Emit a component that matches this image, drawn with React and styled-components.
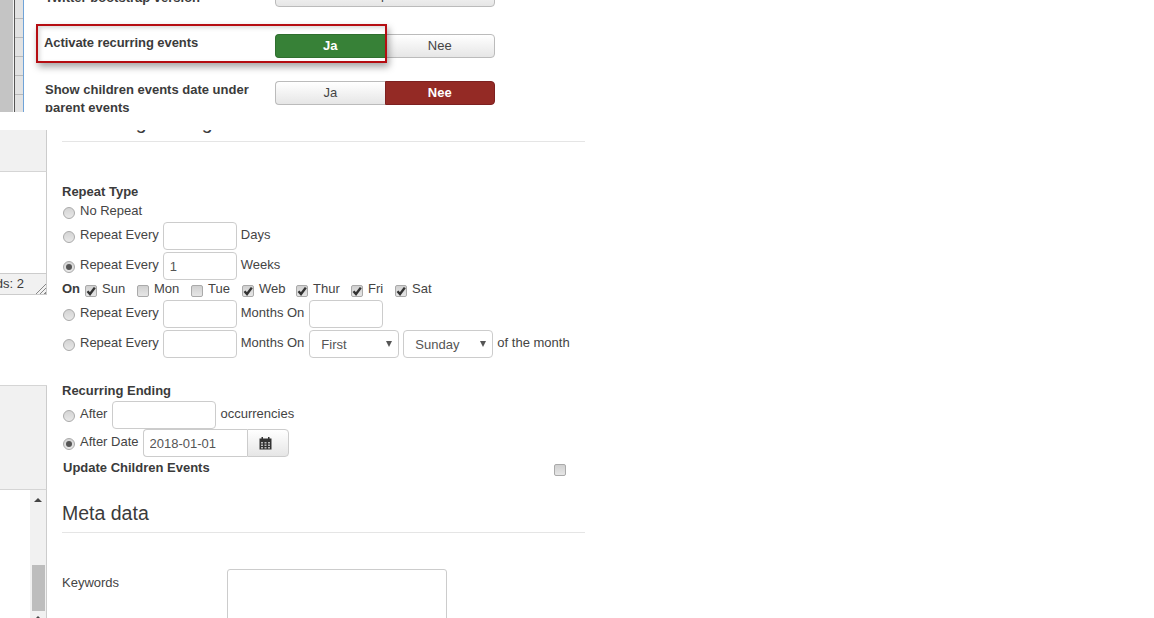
import React from "react";
import styled, { createGlobalStyle, css } from "styled-components";

const Check = () => (
  <svg width="10" height="10" viewBox="0 0 10 10">
    <path d="M1.5 5.2 L4 8 L8.8 1.6" fill="none" stroke="#333" strokeWidth="2.4" />
  </svg>
);

const CalendarIcon = () => (
  <svg width="13" height="13" viewBox="0 0 13 13">
    <path d="M0.5 1.5h12v11h-12z" fill="#333" />
    <path d="M2.5 0h1.5v2H2.5zM9 0h1.5v2H9z" fill="#333" />
    <path
      d="M2 5h2v1.5H2zM5.5 5h2v1.5h-2zM9 5h2v1.5H9zM2 7.5h2V9H2zM5.5 7.5h2V9h-2zM9 7.5h2V9H9zM2 10h2v1.5H2zM5.5 10h2v1.5h-2zM9 10h2v1.5H9z"
      fill="#bbb"
    />
  </svg>
);

const SwitchGroup = ({ value }) => (
  <Switch>
    <SwitchBtn $on={value === "ja"} $tone="green">Ja</SwitchBtn>
    <SwitchBtn $on={value === "nee"} $tone="red">Nee</SwitchBtn>
  </Switch>
);

const App = () => {
  return (
    <>
      <GlobalStyle />
      <Page>
        <TopShot>
          <GridStrip />
          <Settings>
            <CutRow>
              <CutLabel>Twitter bootstrap version</CutLabel>
              <Switch>
                <SwitchBtn>Import</SwitchBtn>
              </Switch>
            </CutRow>
            <SettingRow>
              <ActiveLabel>Activate recurring events</ActiveLabel>
              <SwitchGroup value="ja" />
              <Highlight />
            </SettingRow>
            <SettingRow>
              <SettingLabel>Show children events date under parent events</SettingLabel>
              <SwitchGroup value="nee" />
            </SettingRow>
          </Settings>
        </TopShot>

        <LowerShot>
          <Sidebar>
            <SideBand $h={42} />
            <SideBlank $h={101} />
            <SideFooter>
              <span>ds: 2</span>
              <Grip />
            </SideFooter>
            <SideGap />
            <SideBand $h={104} />
            <SideScroll>
              <Track>
                <Arrow $mt={8} />
                <Thumb />
                <Arrow $mt={5} />
              </Track>
            </SideScroll>
          </Sidebar>

          <Form>
            <ClipTitle>
              <Title>Recurring Settings</Title>
            </ClipTitle>

            <Group>
              <GroupLabel>Repeat Type</GroupLabel>
              <Row $h={21} $pad={0}>
                <Radio />
                <RowText>No Repeat</RowText>
              </Row>
              <Row $h={30}>
                <Radio />
                <RowText>Repeat Every</RowText>
                <Input />
                <RowText>Days</RowText>
              </Row>
              <Row $h={27}>
                <Radio $on />
                <RowText>Repeat Every</RowText>
                <Input defaultValue="1" />
                <RowText>Weeks</RowText>
              </Row>
              <Row $h={21} $pad={0}>
                <OnLabel>On</OnLabel>
                {days.map((d) => (
                  <Day key={d.name} $w={d.w}>
                    <Box>{d.on && <Check />}</Box>
                    <RowText>{d.name}</RowText>
                  </Day>
                ))}
              </Row>
              <Row $h={30}>
                <Radio />
                <RowText>Repeat Every</RowText>
                <Input />
                <RowText $gap={5}>Months On</RowText>
                <Input />
              </Row>
              <Row $h={30}>
                <Radio />
                <RowText>Repeat Every</RowText>
                <Input />
                <RowText $gap={5}>Months On</RowText>
                <Select>
                  <span>First</span>
                  <Caret />
                </Select>
                <Select>
                  <span>Sunday</span>
                  <Caret />
                </Select>
                <RowText>of the month</RowText>
              </Row>
            </Group>

            <EndGroup>
              <EndLabel>Recurring Ending</EndLabel>
              <Row $h={28}>
                <Radio />
                <RowText $gap={5}>After</RowText>
                <Input $w={104} />
                <RowText>occurrencies</RowText>
              </Row>
              <Row $h={28}>
                <Radio $on />
                <RowText>After Date</RowText>
                <DateInput defaultValue="2018-01-01" />
                <CalButton>
                  <CalendarIcon />
                </CalButton>
              </Row>
              <UpdateRow>
                <GroupLabel>Update Children Events</GroupLabel>
                <UpdateBox />
              </UpdateRow>
            </EndGroup>

            <MetaTitle>Meta data</MetaTitle>
            <KeywordRow>
              <KeywordLabel>Keywords</KeywordLabel>
              <Keywords />
            </KeywordRow>
          </Form>
        </LowerShot>
      </Page>
    </>
  );
};

export default App;

const days = [
  { name: "Sun", on: true, w: 52 },
  { name: "Mon", on: false, w: 54 },
  { name: "Tue", on: false, w: 51 },
  { name: "Web", on: true, w: 54 },
  { name: "Thur", on: true, w: 55 },
  { name: "Fri", on: true, w: 44 },
  { name: "Sat", on: true, w: 40 },
];

const GlobalStyle = createGlobalStyle`
  html, body {
    margin: 0;
    padding: 0;
    background: #fff;
  }
  body {
    font-family: "Liberation Sans", Arial, sans-serif;
    font-size: 13px;
    color: #3b3b3b;
  }
  * {
    box-sizing: border-box;
  }
`;

const Page = styled.div`
  width: 1154px;
  height: 618px;
  overflow: hidden;
  background: #fff;
`;

const TopShot = styled.div`
  display: flex;
  height: 112px;
  overflow: hidden;
`;

const GridStrip = styled.div`
  width: 24px;
  flex: none;
  border-right: 1px solid #6fa3d8;
  background:
    linear-gradient(to right, #c4c4c4 0 13px, #f4f4f4 13px 14px, #555 14px 15px, transparent 15px),
    repeating-linear-gradient(to bottom, #e2e2e2 0 18px, #b9b9b9 18px 19px);
`;

const Settings = styled.div`
  margin-left: 21px;
  width: 450px;
  display: flex;
  flex-direction: column;
  margin-top: -27px;
`;

const rowBase = css`
  position: relative;
  display: flex;
  justify-content: space-between;
  align-items: flex-start;
  flex: none;
`;

const CutRow = styled.div`
  ${rowBase}
  height: 61px;
  padding-top: 10px;
`;

const SettingRow = styled.div`
  ${rowBase}
  height: 47px;
`;

const SettingLabel = styled.label`
  width: 210px;
  font-weight: bold;
  font-size: 13px;
  line-height: 18px;
`;

const CutLabel = styled(SettingLabel)`
  margin-top: 6px;
`;

const ActiveLabel = styled(SettingLabel)`
  margin-left: -1px;
  letter-spacing: -0.08px;
`;

const Switch = styled.div`
  display: flex;
  width: 220px;
  height: 24px;
  flex: none;
`;

const SwitchBtn = styled.button`
  flex: 1;
  height: 24px;
  padding: 0 0 2px;
  font: 13px "Liberation Sans", Arial, sans-serif;
  color: #444;
  border: 1px solid #bbb;
  background: linear-gradient(to bottom, #fff, #e6e6e6);
  &:first-child {
    border-top-left-radius: 4px;
    border-bottom-left-radius: 4px;
  }
  &:last-child {
    border-top-right-radius: 4px;
    border-bottom-right-radius: 4px;
  }
  &:first-child:not(:last-child) {
    border-right: 0;
  }
  ${(p) =>
    p.$on &&
    css`
      font-weight: bold;
      color: #fff;
      border-color: ${p.$tone === "green" ? "#2f6f2f" : "#7d2020"};
      background: ${p.$tone === "green" ? "#378137" : "#942a25"};
    `}
`;

const Highlight = styled.div`
  position: absolute;
  left: -9px;
  top: -10px;
  width: 351px;
  height: 39px;
  border: 2px solid #b50d12;
  box-shadow: 2px 4px 7px rgba(0, 0, 0, 0.35), inset 2px 2px 4px rgba(0, 0, 0, 0.15);
`;

const LowerShot = styled.div`
  display: flex;
  align-items: flex-start;
  margin-top: 18px;
  height: 488px;
`;

const Sidebar = styled.div`
  width: 47px;
  height: 488px;
  flex: none;
  display: flex;
  flex-direction: column;
  font-size: 13px;
`;

const SideBand = styled.div`
  height: ${(p) => p.$h}px;
  flex: none;
  background: #f1f1f1;
  border-right: 1px solid #ccc;
  border-bottom: 1px solid #d5d5d5;
`;

const SideBlank = styled.div`
  height: ${(p) => p.$h}px;
  flex: none;
  border-right: 1px solid #ccc;
`;

const SideFooter = styled.div`
  position: relative;
  height: 22px;
  flex: none;
  background: #f1f1f1;
  border-right: 1px solid #ccc;
  border-bottom: 1px solid #ccc;
  border-top: 1px solid #ccc;
  display: flex;
  align-items: center;
  padding: 0 22px 2px 0;
  justify-content: flex-end;
  white-space: nowrap;
`;

const Grip = styled.div`
  position: absolute;
  right: 0;
  bottom: 0;
  width: 11px;
  height: 11px;
  background: repeating-linear-gradient(135deg, transparent 0 2px, #888 2px 3px);
  clip-path: polygon(100% 0, 100% 100%, 0 100%);
`;

const SideGap = styled.div`
  height: 91px;
  flex: none;
  border-bottom: 1px solid #d5d5d5;
`;

const SideScroll = styled.div`
  flex: 1;
  display: flex;
  justify-content: flex-end;
  border-right: 1px solid #ccc;
`;

const Track = styled.div`
  width: 16px;
  height: 100%;
  background: #f1f1f1;
  display: flex;
  flex-direction: column;
  align-items: center;
`;

const Arrow = styled.div`
  flex: none;
  margin-top: ${(p) => p.$mt}px;
  width: 0;
  height: 0;
  border-left: 4px solid transparent;
  border-right: 4px solid transparent;
  border-bottom: 4px solid #444;
`;

const Thumb = styled.div`
  flex: none;
  margin-top: 63px;
  width: 13px;
  height: 46px;
  background: #bdbdbd;
`;

const Form = styled.div`
  width: 523px;
  margin-left: 15px;
  flex: none;
  display: flex;
  flex-direction: column;
`;

const ClipTitle = styled.div`
  height: 12px;
  flex: none;
  overflow: hidden;
  border-bottom: 1px solid #e5e5e5;
`;

const Title = styled.h3`
  margin: -20px 0 0;
  font-size: 19.5px;
  font-weight: normal;
  line-height: 24px;
`;

const Group = styled.div`
  margin-top: 41px;
  display: flex;
  flex-direction: column;
`;

const EndGroup = styled.div`
  margin-top: 22px;
  display: flex;
  flex-direction: column;
`;

const GroupLabel = styled.div`
  font-weight: bold;
  font-size: 13px;
  line-height: 16px;
  height: 18px;
  padding-top: 1px;
`;

const EndLabel = styled(GroupLabel)`
  height: 19px;
`;

const Row = styled.div`
  display: flex;
  align-items: flex-start;
  flex: none;
  height: ${(p) => p.$h}px;
  padding-top: ${(p) => p.$pad ?? 3}px;
`;

const RowText = styled.span`
  line-height: 18px;
  margin: 1px ${(p) => p.$gap ?? 4}px 0 0;
  white-space: nowrap;
  color: #444;
`;

const Radio = styled.span`
  flex: none;
  position: relative;
  width: 12px;
  height: 12px;
  margin: 6px 5px 0 1px;
  border-radius: 50%;
  border: 1px solid #aaa;
  background: linear-gradient(to bottom, #d4d4d4, #e8e8e8);
  ${(p) =>
    p.$on &&
    css`
      &::after {
        content: "";
        position: absolute;
        left: 2px;
        top: 2px;
        width: 6px;
        height: 6px;
        border-radius: 50%;
        background: #555;
      }
    `}
`;

const Input = styled.input`
  flex: none;
  width: ${(p) => p.$w || 74}px;
  height: 28px;
  margin: -3px 4px 0 0;
  padding: 0 6px;
  border: 1px solid #ccc;
  border-radius: 4px;
  font: 13px "Liberation Sans", Arial, sans-serif;
  color: #555;
  background: #fff;
`;

const OnLabel = styled.span`
  flex: none;
  width: 23px;
  margin-top: 1px;
  font-weight: bold;
  line-height: 18px;
`;

const Day = styled.label`
  display: flex;
  align-items: flex-start;
  width: ${(p) => p.$w}px;
  flex: none;
`;

const Box = styled.span`
  flex: none;
  display: inline-flex;
  align-items: center;
  justify-content: center;
  width: 12px;
  height: 12px;
  margin: 6px 5px 0 0;
  border: 1px solid #aaa;
  border-radius: 2px;
  background: linear-gradient(to bottom, #d0d0d0, #e6e6e6);
`;

const UpdateBox = styled(Box)`
  margin: 5px 0 0;
`;

const Select = styled.div`
  flex: none;
  width: 90px;
  height: 28px;
  margin: -3px 4px 0 0;
  padding: 0 6px 0 11px;
  border: 1px solid #ccc;
  border-radius: 4px;
  display: flex;
  align-items: center;
  justify-content: space-between;
  color: #555;
`;

const Caret = styled.span`
  width: 0;
  height: 0;
  border-left: 3.5px solid transparent;
  border-right: 3.5px solid transparent;
  border-top: 6px solid #555;
`;

const DateInput = styled(Input)`
  width: 104px;
  margin-right: 0;
  border-radius: 4px 0 0 4px;
  border-right: 0;
`;

const CalButton = styled.button`
  flex: none;
  width: 42px;
  height: 28px;
  margin-top: -3px;
  padding: 0 4px 0 0;
  border: 1px solid #ccc;
  border-radius: 0 4px 4px 0;
  background: linear-gradient(to bottom, #fff, #e6e6e6);
  display: flex;
  align-items: center;
  justify-content: center;
`;

const UpdateRow = styled.div`
  display: flex;
  justify-content: space-between;
  align-items: flex-start;
  flex: none;
  padding: 0 19px 0 1px;
  margin-top: 2px;
`;

const MetaTitle = styled.h3`
  margin: 24px 0 0;
  height: 32px;
  flex: none;
  font-size: 19.5px;
  font-weight: normal;
  line-height: 24px;
  border-bottom: 1px solid #e5e5e5;
`;

const KeywordRow = styled.div`
  margin-top: 36px;
  display: flex;
  align-items: flex-start;
  flex: none;
`;

const KeywordLabel = styled.label`
  width: 165px;
  padding-top: 5px;
  line-height: 18px;
  flex: none;
  color: #444;
`;

const Keywords = styled.textarea`
  width: 220px;
  height: 90px;
  border: 1px solid #ccc;
  border-radius: 3px;
  resize: none;
`;
